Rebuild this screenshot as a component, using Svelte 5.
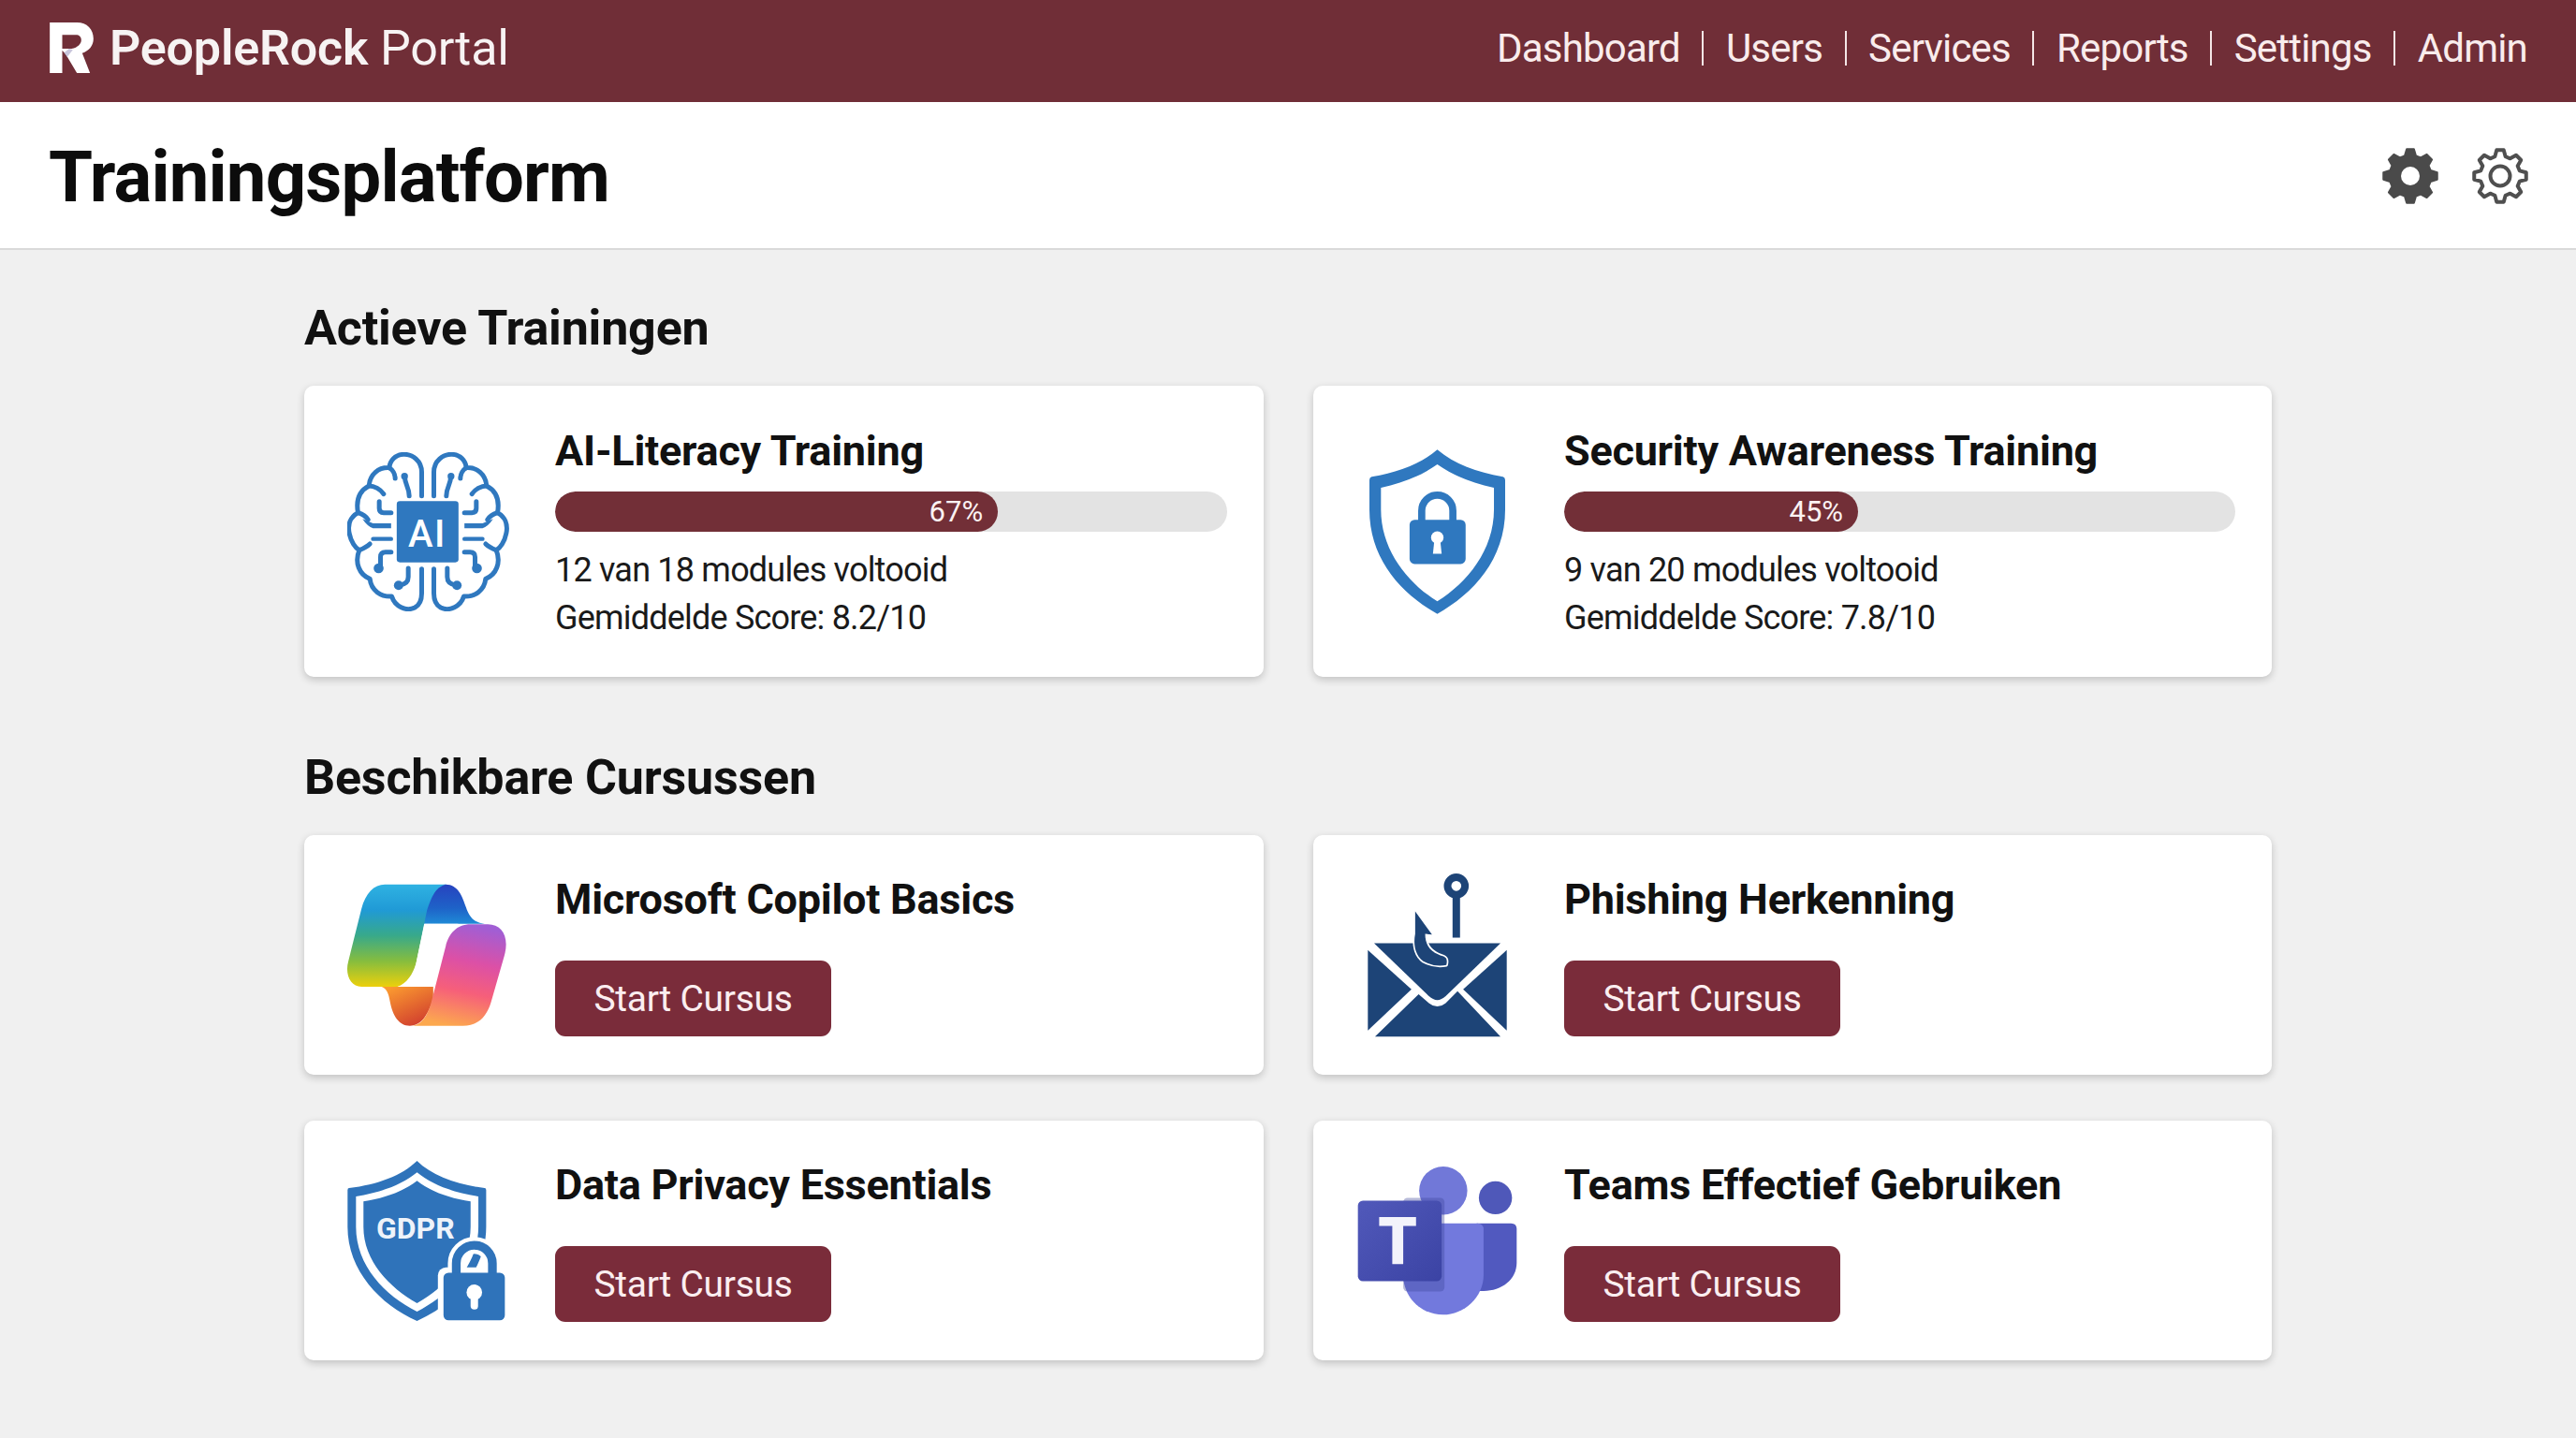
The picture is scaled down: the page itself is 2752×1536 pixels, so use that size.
<script>
  const nav = ['Dashboard', 'Users', 'Services', 'Reports', 'Settings', 'Admin'];

  function gearPath(cx, cy, outer, root, teeth) {
    const step = (Math.PI * 2) / teeth;
    let d = '';
    for (let i = 0; i < teeth; i++) {
      const a = i * step - Math.PI / 2;
      const pts = [
        [root, a - step * 0.34],
        [outer, a - step * 0.17],
        [outer, a + step * 0.17],
        [root, a + step * 0.34]
      ];
      for (const [r, t] of pts) {
        const x = (cx + r * Math.cos(t)).toFixed(2);
        const y = (cy + r * Math.sin(t)).toFixed(2);
        d += (d ? 'L' : 'M') + x + ' ' + y + ' ';
      }
    }
    return d + 'Z';
  }
  const gear = gearPath(32, 32, 29, 22.5, 8);
</script>

<header class="topbar">
  <div class="brand">
    <svg class="logo" viewBox="38 38 140 162" aria-hidden="true">
      <path fill="#fff" fill-rule="evenodd" d="M38 38H125C158 38 178 60 178 90C178 112 164 130 142 136L167 200H125L88 138L78 128V200H38ZM78 78V122L108 122C128 118 139 106 139 94C139 84 132 78 122 78Z"/>
      <path fill="#c9c6dc" d="M84 135L100 122L112 126L94 148Z"/>
    </svg>
    <span class="brand-text"><b>PeopleRock</b> Portal</span>
  </div>
  <nav class="nav">
    {#each nav as item, i}
      {#if i > 0}<i class="sep"></i>{/if}
      <span>{item}</span>
    {/each}
  </nav>
</header>

<div class="subbar">
  <h1>Trainingsplatform</h1>
  <div class="tools">
    <svg viewBox="0 0 64 64" aria-hidden="true">
      <path fill="#4a4a4a" stroke="#4a4a4a" stroke-width="2" stroke-linejoin="round" d={gear}/>
      <circle cx="32" cy="32" r="10" fill="#fff"/>
    </svg>
    <svg viewBox="0 0 64 64" aria-hidden="true">
      <path fill="none" stroke="#4f4f4f" stroke-width="4" stroke-linejoin="round" d={gearPath(32, 32, 28, 21.5, 8)}/>
      <circle cx="32" cy="32" r="10.5" fill="none" stroke="#4f4f4f" stroke-width="4"/>
    </svg>
  </div>
</div>

<main class="page">
  <h2>Actieve Trainingen</h2>
  <section class="grid">
    <article class="card">
      <div class="icon">
        <svg class="i-brain" viewBox="150 218 518 510" aria-hidden="true">
          <g fill="none" stroke="#2f78bf" stroke-width="15" stroke-linecap="round" stroke-linejoin="round">
            <path d="M388 358V282C388 245 358 224 330 225C303 226 286 245 284 268C250 266 222 288 219 326C192 340 176 368 184 412C160 425 150 450 156 478C161 505 176 526 188 532C172 572 188 610 222 624C226 662 258 682 292 680C302 712 338 730 366 716C382 707 388 692 388 670V592"/>
            <path d="M284 268C294 274 303 288 303 302"/>
            <path d="M219 326C236 326 256 336 266 352"/>
            <path d="M184 412C196 416 210 424 216 434"/>
            <path d="M188 532C198 528 212 522 222 512"/>
            <path d="M252 376V398Q252 412 266 412H290"/>
            <path d="M232 496H290" stroke-width="13"/>
            <path d="M290 538H272Q256 538 256 554V588"/>
            <path d="M334 298C334 322 348 330 348 358"/>
            <path d="M345 590V618Q345 640 318 644"/>
          </g>
          <path fill="#2f78bf" d="M198 432L232 446H290V462H232Q214 456 198 432Z"/>
          <circle cx="333" cy="295" r="11" fill="#2f78bf"/>
          <circle cx="250" cy="590" r="16" fill="#2f78bf"/>
          <circle cx="314" cy="645" r="15" fill="#2f78bf"/>
          <g transform="translate(815 0) scale(-1 1)">
            <g fill="none" stroke="#2f78bf" stroke-width="15" stroke-linecap="round" stroke-linejoin="round">
              <path d="M388 358V282C388 245 358 224 330 225C303 226 286 245 284 268C250 266 222 288 219 326C192 340 176 368 184 412C160 425 150 450 156 478C161 505 176 526 188 532C172 572 188 610 222 624C226 662 258 682 292 680C302 712 338 730 366 716C382 707 388 692 388 670V592"/>
              <path d="M284 268C294 274 303 288 303 302"/>
              <path d="M219 326C236 326 256 336 266 352"/>
              <path d="M184 412C196 416 210 424 216 434"/>
              <path d="M188 532C198 528 212 522 222 512"/>
              <path d="M252 376V398Q252 412 266 412H290"/>
              <path d="M232 496H290" stroke-width="13"/>
              <path d="M290 538H272Q256 538 256 554V588"/>
              <path d="M334 298C334 322 348 330 348 358"/>
              <path d="M345 590V618Q345 640 318 644"/>
            </g>
            <path fill="#2f78bf" d="M198 432L232 446H290V462H232Q214 456 198 432Z"/>
            <circle cx="333" cy="295" r="11" fill="#2f78bf"/>
            <circle cx="250" cy="590" r="16" fill="#2f78bf"/>
            <circle cx="314" cy="645" r="15" fill="#2f78bf"/>
          </g>
          <rect x="308" y="375" width="198" height="196" rx="10" fill="#2f78bf"/>
          <text x="406" y="520" text-anchor="middle" class="svgt" font-size="120" font-weight="500" letter-spacing="5" fill="#fff">AI</text>
        </svg>
      </div>
      <div class="body">
        <h3>AI-Literacy Training</h3>
        <div class="bar"><div class="fill" style="width:65.9%"><span>67%</span></div></div>
        <p>12 van 18 modules voltooid</p>
        <p>Gemiddelde Score: 8.2/10</p>
      </div>
    </article>

    <article class="card">
      <div class="icon">
        <svg class="i-shield" viewBox="188 208 436 527" aria-hidden="true">
          <path fill="#2f78bf" fill-rule="evenodd" d="M406 208C350 255 280 280 195 295Q188 297 188 305V400C188 560 290 670 406 735C522 670 624 560 624 400V305Q624 297 617 295C532 280 462 255 406 208ZM406 255C350 295 290 315 225 330V400C225 530 310 635 406 695C502 635 588 530 588 400V330C522 315 462 295 406 255Z"/>
          <path fill="none" stroke="#2f78bf" stroke-width="23" d="M356 445V404A50 50 0 0 1 456 404V445"/>
          <rect x="317" y="433" width="180" height="142" rx="16" fill="#2f78bf"/>
          <circle cx="406" cy="490" r="20" fill="#fff"/>
          <path fill="#fff" d="M397 495H415L420 542H392Z"/>
        </svg>
      </div>
      <div class="body">
        <h3>Security Awareness Training</h3>
        <div class="bar"><div class="fill" style="width:43.8%"><span>45%</span></div></div>
        <p>9 van 20 modules voltooid</p>
        <p>Gemiddelde Score: 7.8/10</p>
      </div>
    </article>
  </section>

  <h2>Beschikbare Cursussen</h2>
  <section class="grid">
    <article class="card short">
      <div class="icon">
        <svg class="i-copilot" viewBox="122 130 512 456" aria-hidden="true">
          <defs>
            <linearGradient id="cpA" x1="0" y1="0" x2="0" y2="1">
              <stop offset="0" stop-color="#2fb2e2"/><stop offset=".25" stop-color="#209ad6"/>
              <stop offset=".5" stop-color="#38a98a"/><stop offset=".75" stop-color="#86bd3e"/>
              <stop offset="1" stop-color="#ecd00c"/>
            </linearGradient>
            <linearGradient id="cpB" x1="0" y1="0" x2="0" y2="1">
              <stop offset="0" stop-color="#2743bf"/><stop offset=".6" stop-color="#1e62c8"/><stop offset="1" stop-color="#1f8ad6"/>
            </linearGradient>
            <linearGradient id="cpC" x1=".6" y1="0" x2=".4" y2="1">
              <stop offset="0" stop-color="#a15ed4"/><stop offset=".35" stop-color="#dc50a6"/>
              <stop offset=".65" stop-color="#f65f7a"/><stop offset="1" stop-color="#fca84e"/>
            </linearGradient>
            <linearGradient id="cpD" x1=".2" y1="0" x2=".8" y2="1">
              <stop offset="0" stop-color="#fb9a30"/><stop offset="1" stop-color="#cf3b2e"/>
            </linearGradient>
          </defs>
          <path fill="url(#cpB)" d="M440 132C480 132 494 172 505 205C516 240 535 256 565 258H355L372 215C388 170 405 132 440 132Z"/>
          <path fill="url(#cpA)" d="M245 132H445C410 135 395 170 380 215L345 385C335 430 315 460 280 460H170C135 460 116 420 128 378L170 210C183 160 210 132 245 132Z"/>
          <path fill="url(#cpD)" d="M235 460H400V500C382 552 362 585 325 585C290 585 270 552 262 510C257 480 250 466 235 460Z"/>
          <path fill="#fff" d="M372 258H480L440 330L400 460H285C315 450 335 420 345 385Z"/>
          <path fill="url(#cpC)" d="M520 260H575C620 260 645 300 628 360L585 510C570 560 540 585 495 585H330C365 585 385 545 395 505L440 330C450 290 475 260 520 260Z"/>
        </svg>
      </div>
      <div class="body">
        <h3>Microsoft Copilot Basics</h3>
        <button class="btn">Start Cursus</button>
      </div>
    </article>

    <article class="card short">
      <div class="icon">
        <svg class="i-phish" viewBox="122 96 446 526" aria-hidden="true">
          <circle cx="406" cy="136" r="28" fill="none" stroke="#1d4477" stroke-width="24"/>
          <rect x="394" y="165" width="24" height="137" fill="#1d4477"/>
          <g fill="#1d4477">
            <path d="M142 320H548L372 490Q345 515 318 490Z"/>
            <path d="M122 342L262 468L122 600Z"/>
            <path d="M568 342L428 468L568 600Z"/>
            <path d="M145 620L285 484L318 512Q345 534 372 512L410 474L548 620Z"/>
          </g>
          <path fill="#1d4477" stroke="#fff" stroke-width="10" paint-order="stroke" stroke-linejoin="round" d="M274 218L328 292L306 290C306 325 322 350 365 362Q380 368 374 390Q338 398 300 378C272 358 268 320 274 290Z"/>
        </svg>
      </div>
      <div class="body">
        <h3>Phishing Herkenning</h3>
        <button class="btn">Start Cursus</button>
      </div>
    </article>

    <article class="card short">
      <div class="icon">
        <svg class="i-gdpr" viewBox="95 88 506 514" aria-hidden="true">
          <path fill="#2f73ba" d="M318 88C270 135 190 165 100 175Q95 175 95 182V300C95 440 200 550 318 602C436 550 540 440 540 300V182Q540 175 535 175C446 165 366 135 318 88Z"/>
          <path fill="#fff" d="M318 125C270 165 200 190 122 202V300C122 425 215 520 318 572C420 520 515 425 515 300V202C436 190 366 165 318 125Z"/>
          <path fill="#2f73ba" d="M318 152C275 185 215 208 146 218V300C146 410 230 495 318 545C406 495 490 410 490 300V218C420 208 360 185 318 152Z"/>
          <text x="313" y="338" text-anchor="middle" class="svgt" font-size="96" font-weight="700" fill="#eef3fa">GDPR</text>
          <path fill="none" stroke="#fff" stroke-width="54" d="M444 440V417A58 58 0 0 1 560 417V440"/>
          <rect x="385" y="430" width="233" height="172" rx="26" fill="#fff"/>
          <path fill="none" stroke="#2f73ba" stroke-width="28" d="M444 450V417A58 58 0 0 1 560 417V450"/>
          <rect x="403" y="447" width="197" height="153" rx="16" fill="#2f73ba"/>
          <circle cx="502" cy="510" r="25" fill="#fff"/>
          <path fill="#fff" d="M490 515H514V554Q514 565 502 565Q490 565 490 554Z"/>
        </svg>
      </div>
      <div class="body">
        <h3>Data Privacy Essentials</h3>
        <button class="btn">Start Cursus</button>
      </div>
    </article>

    <article class="card short">
      <div class="icon">
        <svg class="i-teams" viewBox="58 78 512 476" aria-hidden="true">
          <defs>
            <linearGradient id="tmA" x1="0" y1="0" x2="1" y2="1">
              <stop offset="0" stop-color="#5159ba"/><stop offset="1" stop-color="#3b43a4"/>
            </linearGradient>
          </defs>
          <circle cx="500" cy="178" r="53" fill="#4f58b9"/>
          <path fill="#5159bf" d="M440 260H550Q568 260 568 278V385C568 440 520 476 462 476H420Z"/>
          <circle cx="333" cy="155" r="77" fill="#7178d8"/>
          <path fill="#7279dd" d="M300 260H442Q462 260 462 280V425C462 495 400 552 332 552C262 552 205 495 205 425V300Z"/>
          <rect x="205" y="178" width="132" height="300" rx="14" fill="#3f469c" opacity=".38"/>
          <rect x="60" y="187" width="268" height="258" rx="16" fill="url(#tmA)"/>
          <path fill="#f3f3fb" d="M128 240H246V268H205V390H170V268H128Z"/>
        </svg>
      </div>
      <div class="body">
        <h3>Teams Effectief Gebruiken</h3>
        <button class="btn">Start Cursus</button>
      </div>
    </article>
  </section>
</main>

<style>
  :global(body) {
    margin: 0;
    background: #f0f0f0;
    font-family: Roboto, "Liberation Sans", sans-serif;
    color: #111;
  }
  .topbar {
    height: 109px;
    box-sizing: border-box;
    background: #702e37;
    color: #fff;
    display: flex;
    align-items: center;
    justify-content: space-between;
    padding: 0 52px 5px 53px;
  }
  .brand { display: flex; align-items: center; gap: 17px; }
  .logo { width: 47px; height: 54px; display: block; margin-bottom: 3px; }
  .brand-text { font-size: 52px; font-weight: 400; line-height: 1; letter-spacing: -0.2px; color: #f7f3f3; }
  .brand-text b { font-weight: 600; }
  .nav { display: flex; align-items: center; gap: 23.5px; font-size: 42px; letter-spacing: -0.8px; color: #f9ecec; margin-bottom: 2px; }
  .sep { display: block; width: 2px; height: 37px; background: #f4e6e6; }
  .subbar {
    height: 158px;
    box-sizing: border-box;
    background: #fff;
    border-bottom: 2px solid #d9d9d9;
    display: flex;
    align-items: center;
    justify-content: space-between;
    padding: 3px 49px 0 52px;
  }
  h1 { margin: 0; font-size: 76px; font-weight: 700; line-height: 1; letter-spacing: -0.8px; color: #0c0c0c; }
  .tools { display: flex; gap: 32px; margin-bottom: 2px; }
  .tools svg { width: 64px; height: 64px; display: block; }
  .page { width: 2102px; margin: 0 auto; padding: 54px 0 83px; }
  h2 { margin: 0 0 31px; font-size: 52px; font-weight: 700; line-height: 60px; letter-spacing: -0.2px; color: #111; }
  .grid { display: grid; grid-template-columns: 1025px 1024px; column-gap: 53px; row-gap: 49px; margin-bottom: 78px; }
  .grid:last-child { margin-bottom: 0; }
  .card {
    background: #fff;
    border-radius: 10px;
    box-shadow: 0 3px 9px rgba(0, 0, 0, 0.2);
    display: flex;
    box-sizing: border-box;
    height: 311px;
  }
  .card.short { height: 256px; }
  .icon { width: 264px; margin-right: 4px; flex: none; display: flex; align-items: center; justify-content: center; }
  .icon svg { display: block; }
  .i-brain { width: 173px; height: 170px; }
  .i-shield { width: 145px; height: 176px; }
  .i-copilot { width: 171px; height: 152px; margin-right: 4px; }
  .i-phish { width: 149px; height: 175px; }
  .i-gdpr { width: 169px; height: 171px; margin-right: 3px; }
  .i-teams { width: 171px; height: 159px; }
  .svgt { font-family: Roboto, "Liberation Sans", sans-serif; }
  .body { flex: 1; min-width: 0; padding: 44px 39px 0 0; }
  .short .body { padding-top: 43px; }
  h3 { margin: 0; font-size: 45px; font-weight: 700; line-height: 52px; letter-spacing: -0.26px; color: #111; }
  .bar { height: 43px; margin: 17px 0 16px; border-radius: 22px; background: #e3e3e3; overflow: hidden; }
  .fill {
    height: 100%;
    background: #722f37;
    border-radius: 22px;
    display: flex;
    align-items: center;
    justify-content: flex-end;
    padding-right: 16px;
    box-sizing: border-box;
    color: #fbf2f2;
    font-size: 31px;
  }
  p { margin: 0; font-size: 36px; line-height: 51px; letter-spacing: -0.8px; color: #1a1a1a; }
  .btn {
    display: block;
    margin-top: 39px;
    width: 295px;
    height: 81px;
    border: 0;
    border-radius: 11px;
    background: #7a2c3a;
    color: #fbeef0;
    font: 400 39px Roboto, "Liberation Sans", sans-serif;
    letter-spacing: -0.3px;
    padding: 0;
  }
</style>
